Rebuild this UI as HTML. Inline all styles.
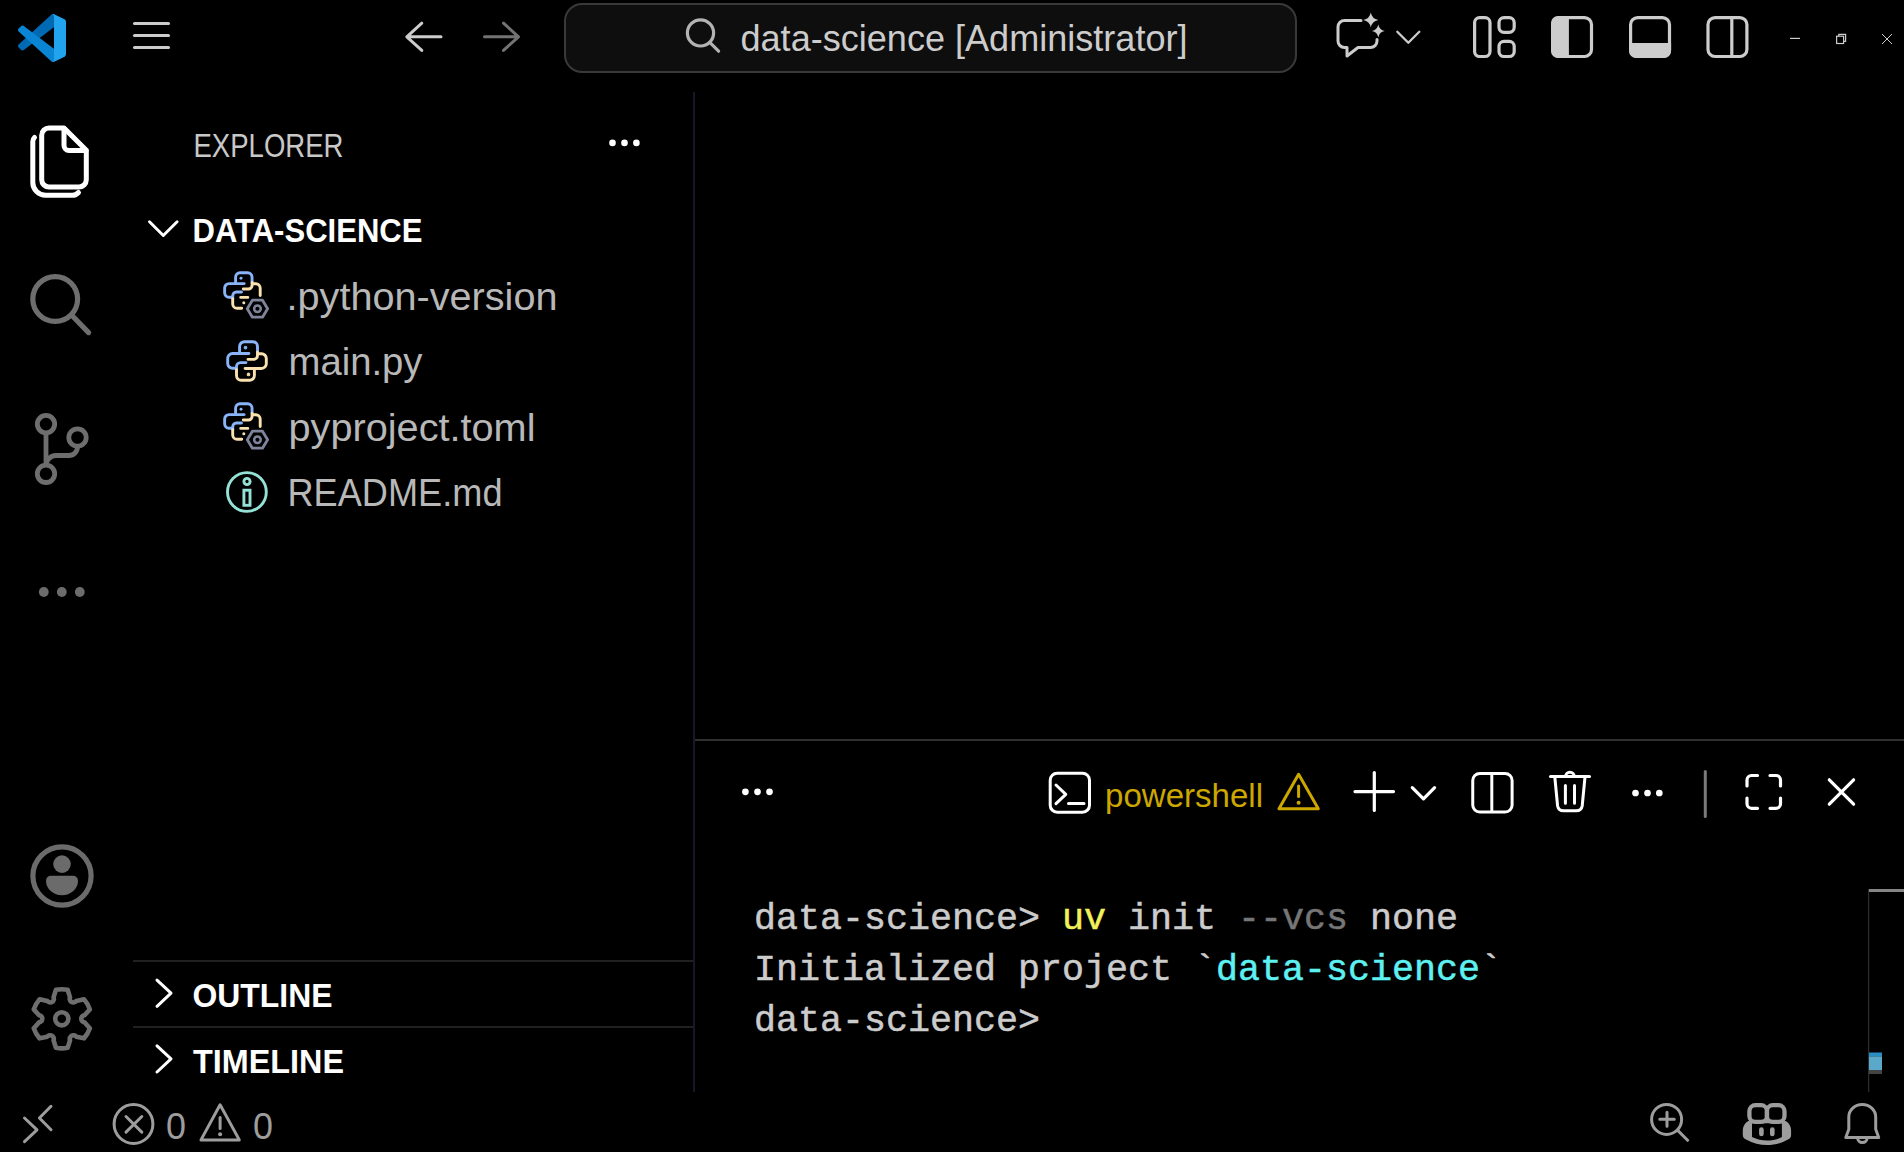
<!DOCTYPE html>
<html lang="en">
<head>
<meta charset="utf-8">
<title>data-science [Administrator] - Visual Studio Code</title>
<style>
  html, body { margin: 0; padding: 0; background: #000; width: 1904px; height: 1152px; overflow: hidden; }
  body { position: relative; font-family: "Liberation Sans", sans-serif; color: #ccc; }
  .abs { position: absolute; }
  svg { position: absolute; left: 0; top: 0; overflow: visible; }
  .titlebar { left: 0; top: 0; width: 1904px; height: 92px; background: #000; }
  .searchbox { left: 564px; top: 3px; width: 729px; height: 66px; background: #0e0e0e; border: 2px solid #393939; border-radius: 18px; }
  .activitybar { left: 0; top: 92px; width: 124px; height: 1000px; background: #000; }
  .sidebar { left: 124px; top: 92px; width: 569px; height: 1000px; background: #000; }
  .sb-border { left: 693px; top: 92px; width: 2px; height: 1000px; background: #1a1628; }
  .sep { left: 133px; width: 560px; height: 2px; background: #202020; }
  .panel-border { left: 695px; top: 739px; width: 1209px; height: 2px; background: #2f2f2f; }
  .statusbar { left: 0; top: 1092px; width: 1904px; height: 60px; background: #000; }
  text { font-family: "Liberation Sans", sans-serif; white-space: pre; }
  .mono { font-family: "Liberation Mono", monospace; stroke-width: 0.5px; }
</style>
</head>
<body>
  <div class="abs titlebar"></div>
  <div class="abs searchbox"></div>
  <div class="abs activitybar"></div>
  <div class="abs sidebar"></div>
  <div class="abs sb-border"></div>
  <div class="abs sep" style="top:960px"></div>
  <div class="abs sep" style="top:1026px"></div>
  <div class="abs panel-border"></div>
  <div class="abs statusbar"></div>

  <svg width="1904" height="1152" viewBox="0 0 1904 1152">
    
    <!-- VS Code logo -->
    <g transform="translate(18,14) scale(0.48)">
      <path fill="#0069b4" d="M96.46 10.8L75.86 .88C73.47-.27 70.62.21 68.75 2.08L1.3 63.58c-1.82 1.66-1.81 4.51 0 6.16l5.51 5.01c1.49 1.35 3.72 1.45 5.32.24L93.36 13.37C96.09 11.3 100 13.25 100 16.67v-.24c0-2.4-1.38-4.59-3.54-5.63z"/>
      <path fill="#0a85d4" d="M96.46 89.2L75.86 99.12c-2.39 1.15-5.24.67-7.11-1.2L1.3 36.42c-1.82-1.66-1.81-4.51 0-6.16l5.51-5.01c1.49-1.35 3.72-1.45 5.32-.24l81.23 61.62c2.73 2.07 6.64.12 6.64-3.3v.24c0 2.4-1.38 4.59-3.54 5.63z"/>
      <path fill="#22a3ee" d="M75.86 99.13c-2.39 1.15-5.24.66-7.11-1.21C71.06 100.22 75 98.59 75 95.33V4.67c0-3.26-3.94-4.89-6.25-2.59C70.62.21 73.47-.27 75.86.87l20.6 9.91c2.16 1.04 3.54 3.23 3.54 5.63v67.17c0 2.4-1.38 4.59-3.54 5.63l-20.6 9.91z"/>
    </g>
    <!-- hamburger -->
    <g stroke="#cccccc" stroke-width="3" stroke-linecap="round">
      <line x1="134.5" y1="23.5" x2="168.5" y2="23.5"/>
      <line x1="134.5" y1="35.5" x2="168.5" y2="35.5"/>
      <line x1="134.5" y1="47.5" x2="168.5" y2="47.5"/>
    </g>
    <!-- back / forward -->
    <g fill="none" stroke="#cccccc" stroke-width="3" stroke-linecap="round" stroke-linejoin="round">
      <path d="M441 36.8H407M421.8 23.2L406.8 36.8L421.8 50.4"/>
    </g>
    <g fill="none" stroke="#737373" stroke-width="3" stroke-linecap="round" stroke-linejoin="round">
      <path d="M484.5 36.8H518.3M503.5 23.2L518.5 36.8L503.5 50.4"/>
    </g>
    <!-- search -->
    <g fill="none" stroke="#b3b3b3" stroke-width="3.2" stroke-linecap="round">
      <circle cx="700.5" cy="32.9" r="13.1"/>
      <line x1="710.5" y1="43.2" x2="718.6" y2="51.2"/>
    </g>
    <text x="740.5" y="51.2" font-size="37" fill="#cccccc" textLength="447" lengthAdjust="spacingAndGlyphs">data-science [Administrator]</text>
    <!-- copilot chat -->
    <g fill="none" stroke="#cccccc" stroke-width="3" stroke-linejoin="round" stroke-linecap="round">
      <path d="M1361 20.5H1344.5A6.5 6.5 0 0 0 1338 27V41A6.5 6.5 0 0 0 1344.5 47.5H1347V56L1358 47.5H1370.5A6.5 6.5 0 0 0 1377 41V39.5"/>
      <path d="M1397.3 31.8L1408.3 42.8L1419.3 31.8" stroke-width="2.3"/>
    </g>
    <g fill="#cccccc">
      <path d="M1370.8 12.5Q1372 18.8 1378.3 20Q1372 21.2 1370.8 27.5Q1369.6 21.2 1363.3 20Q1369.6 18.8 1370.8 12.5Z"/>
      <path d="M1378.3 24.6Q1379.3 30 1384.7 31Q1379.3 32 1378.3 37.4Q1377.3 32 1371.9 31Q1377.3 30 1378.3 24.6Z"/>
    </g>
    <!-- layout icons -->
    <g fill="none" stroke="#cccccc" stroke-width="3.2">
      <rect x="1474.6" y="17.6" width="15.4" height="38.9" rx="5"/>
      <rect x="1499" y="17.6" width="15.2" height="14.7" rx="5"/>
      <rect x="1499" y="41.3" width="15.2" height="15.2" rx="5"/>
      <rect x="1552.6" y="17.6" width="38.9" height="38.9" rx="7"/>
      <rect x="1630.6" y="17.6" width="38.9" height="38.9" rx="7"/>
      <rect x="1708" y="17.6" width="38.9" height="38.9" rx="7"/>
      <line x1="1731.8" y1="18" x2="1731.8" y2="56"/>
    </g>
    <g fill="#cccccc">
      <path d="M1568.9 16H1558A7 7 0 0 0 1551 23V51.1A7 7 0 0 0 1558 58.1H1568.9Z"/>
      <path d="M1629 42.9V51.1A7 7 0 0 0 1636 58.1H1664.1A7 7 0 0 0 1671.1 51.1V42.9Z"/>
    </g>
    <!-- window controls -->
    <g fill="none" stroke="#cccccc" stroke-width="1.2">
      <line x1="1790" y1="38.4" x2="1800" y2="38.4"/>
      <rect x="1836.6" y="36.2" width="7" height="7.3"/>
      <path d="M1838.8 36.2V34.4H1845.6V41.4H1843.6"/>
      <path d="M1882 34L1892 44M1892 34L1882 44" stroke-width="1"/>
    </g>

    
    <!-- explorer (files) -->
    <g fill="none" stroke="#ffffff" stroke-width="5" stroke-linecap="round" stroke-linejoin="round">
      <path d="M64 128H49A7.3 7.3 0 0 0 41.7 135.3V179.7A7.3 7.3 0 0 0 49 187H79A7.3 7.3 0 0 0 86.3 179.7V150.3L64 128Z"/>
      <path d="M64 128.5V145.5A5 5 0 0 0 69 150.5H86"/>
      <path d="M34.5 137.5A5.5 5.5 0 0 0 32.8 141.5V182.5A12.8 12.8 0 0 0 45.6 195.3H71.5A8.5 8.5 0 0 0 78.5 192.5"/>
    </g>
    <!-- search -->
    <g fill="none" stroke="#6e6e6e" stroke-width="5.2" stroke-linecap="round">
      <circle cx="55.2" cy="299" r="22.4"/>
      <line x1="72" y1="315.5" x2="88.6" y2="332.6"/>
    </g>
    <!-- source control -->
    <g fill="none" stroke="#6e6e6e" stroke-width="4.8">
      <circle cx="46" cy="424.1" r="8.7"/>
      <circle cx="46" cy="473.8" r="8.7"/>
      <circle cx="77.5" cy="437.5" r="8.7"/>
      <line x1="46" y1="432.5" x2="46" y2="465.5"/>
      <path d="M77.5 446V447A8.5 8.5 0 0 1 69 455.5H56A10 10 0 0 0 46 465.5"/>
    </g>
    <!-- more -->
    <g fill="#6c6c6c">
      <circle cx="43.8" cy="592" r="4.9"/>
      <circle cx="61.8" cy="592" r="4.9"/>
      <circle cx="79.8" cy="592" r="4.9"/>
    </g>
    <!-- account -->
    <g fill="#6e6e6e">
      <circle cx="62" cy="876" r="29.1" fill="none" stroke="#6b6b6b" stroke-width="5.2"/>
      <circle cx="62" cy="864.1" r="8.8" fill="#6b6b6b"/>
      <path fill="#6b6b6b" d="M51 875.8H73A5 5 0 0 1 78 880.8A16 14.5 0 0 1 46 880.8A5 5 0 0 1 51 875.8Z"/>
    </g>
    <!-- gear -->
    <g fill="none" stroke="#6e6e6e" stroke-width="4.6" stroke-linejoin="round">
      <path d="M53.56 997.33L55.95 989.78A29.60 29.60 0 0 1 67.65 989.78L70.04 997.33A3.62 3.62 0 0 0 76.27 1000.93L84.00 999.23A29.60 29.60 0 0 1 89.85 1009.36L84.52 1015.20A3.62 3.62 0 0 0 84.52 1022.40L89.85 1028.24A29.60 29.60 0 0 1 84.00 1038.37L76.27 1036.67A3.62 3.62 0 0 0 70.04 1040.27L67.65 1047.82A29.60 29.60 0 0 1 55.95 1047.82L53.56 1040.27A3.62 3.62 0 0 0 47.33 1036.67L39.60 1038.37A29.60 29.60 0 0 1 33.75 1028.24L39.08 1022.40A3.62 3.62 0 0 0 39.08 1015.20L33.75 1009.36A29.60 29.60 0 0 1 39.60 999.23L47.33 1000.93A3.62 3.62 0 0 0 53.56 997.33Z"/>
      <circle cx="61.8" cy="1018.8" r="6.6"/>
    </g>

    
    
    <text x="193.5" y="156.7" font-size="34" fill="#c8c8c8" textLength="150" lengthAdjust="spacingAndGlyphs">EXPLORER</text>
    <g fill="#ffffff"><circle cx="612.5" cy="142.9" r="3.3"/><circle cx="624.5" cy="142.9" r="3.3"/><circle cx="636.4" cy="142.9" r="3.3"/></g>
    <path d="M149.5 221.8L163.3 235.5L177.1 221.8" fill="none" stroke="#ffffff" stroke-width="3" stroke-linecap="round" stroke-linejoin="round"/>
    <text x="192.5" y="241.6" font-size="33" font-weight="700" fill="#ffffff" textLength="230" lengthAdjust="spacingAndGlyphs">DATA-SCIENCE</text>
    <g transform="translate(218,268)">
        <g transform="translate(24.4 22.5) scale(0.92) translate(-27 -26)" fill="none" stroke-width="3.15" stroke-linecap="round" stroke="#89b4fa"><path d="M26 27.6H20.5A4 4 0 0 0 16.5 31.6V34.8M16.5 33.3H12.5A4.8 4.8 0 0 1 7.7 28.5V23.3A4.8 4.8 0 0 1 12.5 18.5H28.9M19.6 18.5V11.5A4.8 4.8 0 0 1 24.4 6.7H32.7A4.8 4.8 0 0 1 37.5 11.5V17.2"/><circle cx="25.5" cy="12.6" r="1.6" fill="#89b4fa" stroke="none"/></g>
        <g fill="none" stroke="#f9e2af" stroke-width="2.9" stroke-linecap="round">
          <path d="M25.3 21H30.4A3.7 3.7 0 0 0 34.1 17.3V14.4M34.1 15.8H37.8A4.4 4.4 0 0 1 42.2 20.2V27.5M29.8 29.4H22.7M23.7 40.3H19.1A4.4 4.4 0 0 1 14.7 35.9V30.6"/>
          <circle cx="25.8" cy="34.8" r="1.5" fill="#f9e2af" stroke="none"/>
        </g>
        <g fill="none" stroke="#7f849c" stroke-width="2.8" stroke-linejoin="round">
          <path d="M29.3 40.7L34.4 32.2H44.5L49.6 40.7L44.5 49.2H34.4Z"/>
          <circle cx="39.45" cy="40.7" r="3.3" stroke-width="2.5"/>
        </g>
      </g>
    <text x="286.5" y="310.1" font-size="39" fill="#b8b8b8" textLength="271" lengthAdjust="spacingAndGlyphs">.python-version</text>
    <g transform="translate(220,335)" fill="none" stroke-width="2.9" stroke-linecap="round">
        <g stroke="#89b4fa"><path d="M26 27.6H20.5A4 4 0 0 0 16.5 31.6V34.8M16.5 33.3H12.5A4.8 4.8 0 0 1 7.7 28.5V23.3A4.8 4.8 0 0 1 12.5 18.5H28.9M19.6 18.5V11.5A4.8 4.8 0 0 1 24.4 6.7H32.7A4.8 4.8 0 0 1 37.5 11.5V17.2"/><circle cx="25.5" cy="12.6" r="1.3" fill="#89b4fa" stroke="none"/><circle cx="25.5" cy="12.6" r="0.4"/></g>
        <g stroke="#f9e2af" transform="rotate(180 27 26)"><path d="M26 27.6H20.5A4 4 0 0 0 16.5 31.6V34.8M16.5 33.3H12.5A4.8 4.8 0 0 1 7.7 28.5V23.3A4.8 4.8 0 0 1 12.5 18.5H28.9M19.6 18.5V11.5A4.8 4.8 0 0 1 24.4 6.7H32.7A4.8 4.8 0 0 1 37.5 11.5V17.2"/><circle cx="25.5" cy="12.6" r="1.3" fill="#f9e2af" stroke="none"/><circle cx="25.5" cy="12.6" r="0.4"/></g>
      </g>
    <text x="288.5" y="375.3" font-size="39" fill="#b8b8b8" textLength="134" lengthAdjust="spacingAndGlyphs">main.py</text>
    <g transform="translate(218,399)">
        <g transform="translate(24.4 22.5) scale(0.92) translate(-27 -26)" fill="none" stroke-width="3.15" stroke-linecap="round" stroke="#89b4fa"><path d="M26 27.6H20.5A4 4 0 0 0 16.5 31.6V34.8M16.5 33.3H12.5A4.8 4.8 0 0 1 7.7 28.5V23.3A4.8 4.8 0 0 1 12.5 18.5H28.9M19.6 18.5V11.5A4.8 4.8 0 0 1 24.4 6.7H32.7A4.8 4.8 0 0 1 37.5 11.5V17.2"/><circle cx="25.5" cy="12.6" r="1.6" fill="#89b4fa" stroke="none"/></g>
        <g fill="none" stroke="#f9e2af" stroke-width="2.9" stroke-linecap="round">
          <path d="M25.3 21H30.4A3.7 3.7 0 0 0 34.1 17.3V14.4M34.1 15.8H37.8A4.4 4.4 0 0 1 42.2 20.2V27.5M29.8 29.4H22.7M23.7 40.3H19.1A4.4 4.4 0 0 1 14.7 35.9V30.6"/>
          <circle cx="25.8" cy="34.8" r="1.5" fill="#f9e2af" stroke="none"/>
        </g>
        <g fill="none" stroke="#7f849c" stroke-width="2.8" stroke-linejoin="round">
          <path d="M29.3 40.7L34.4 32.2H44.5L49.6 40.7L44.5 49.2H34.4Z"/>
          <circle cx="39.45" cy="40.7" r="3.3" stroke-width="2.5"/>
        </g>
      </g>
    <text x="288.5" y="440.7" font-size="39" fill="#b8b8b8" textLength="247" lengthAdjust="spacingAndGlyphs">pyproject.toml</text>
    <g fill="none" stroke="#94e2d5" stroke-width="2.9">
      <circle cx="246.9" cy="492" r="19.4"/>
      <circle cx="247" cy="481.5" r="3.1"/>
      <rect x="243.9" y="490.2" width="6.1" height="15.1"/>
    </g>
    <text x="287.5" y="506.3" font-size="39" fill="#b8b8b8" textLength="215" lengthAdjust="spacingAndGlyphs">README.md</text>
    <path d="M157 980.1L171 993.2L157 1006.3" fill="none" stroke="#ffffff" stroke-width="3" stroke-linecap="round" stroke-linejoin="round"/>
    <text x="192.5" y="1006.9" font-size="33" font-weight="700" fill="#ffffff" textLength="140" lengthAdjust="spacingAndGlyphs">OUTLINE</text>
    <path d="M157 1045.8L171 1058.9L157 1072" fill="none" stroke="#ffffff" stroke-width="3" stroke-linecap="round" stroke-linejoin="round"/>
    <text x="193" y="1072.7" font-size="33" font-weight="700" fill="#ffffff" textLength="151" lengthAdjust="spacingAndGlyphs">TIMELINE</text>

    
    <!-- terminal toolbar -->
    <g fill="#ffffff"><circle cx="745.4" cy="791.8" r="3.35"/><circle cx="757.5" cy="791.8" r="3.35"/><circle cx="769.5" cy="791.8" r="3.35"/></g>
    <g fill="none" stroke="#ffffff" stroke-width="3" stroke-linecap="round" stroke-linejoin="round">
      <rect x="1050.2" y="773.2" width="39.3" height="39" rx="7"/>
      <path d="M1056 785L1065.8 794.3L1056 803.6M1068.5 803.6H1084"/>
    </g>
    <text x="1105" y="807.2" font-size="34" fill="#cca700" textLength="158" lengthAdjust="spacingAndGlyphs">powershell</text>
    <g fill="none" stroke="#cca700" stroke-width="3" stroke-linejoin="round" stroke-linecap="round">
      <path d="M1298.6 774.2L1318.3 808.8H1279Z"/>
      <line x1="1298.6" y1="786" x2="1298.6" y2="796.5"/>
    </g>
    <circle cx="1298.6" cy="802.8" r="2" fill="#cca700"/>
    <g fill="none" stroke="#ffffff" stroke-width="3.2" stroke-linecap="round" stroke-linejoin="round">
      <path d="M1355 791.6H1393.5M1374.3 772.5V810.5"/>
      <path d="M1412.3 787.7L1423.5 798.9L1434.6 787.7"/>
    </g>
    <g fill="none" stroke="#ffffff" stroke-width="3">
      <rect x="1472.75" y="773.5" width="39.35" height="38.6" rx="7"/>
      <line x1="1491.8" y1="774" x2="1491.8" y2="812"/>
    </g>
    <g fill="none" stroke="#ffffff" stroke-width="3" stroke-linecap="round" stroke-linejoin="round">
      <path d="M1550.5 776.6H1589.5"/>
      <path d="M1565.5 776.6A4.4 4.4 0 0 1 1574.3 776.6"/>
      <path d="M1554.8 777L1557.6 806A6 6 0 0 0 1563.5 810.8H1576.3A6 6 0 0 0 1582.2 806L1585 777"/>
      <path d="M1565.4 785.5V803.2M1574.5 785.5V803.2"/>
    </g>
    <g fill="#ffffff"><circle cx="1635.5" cy="793" r="3.35"/><circle cx="1647.5" cy="793" r="3.35"/><circle cx="1659.3" cy="793" r="3.35"/></g>
    <line x1="1705.3" y1="771.5" x2="1705.3" y2="816.5" stroke="#7a7a7a" stroke-width="3" stroke-linecap="round"/>
    <g fill="none" stroke="#ffffff" stroke-width="3.2" stroke-linecap="round" stroke-linejoin="round">
      <path d="M1747 786V780A4.5 4.5 0 0 1 1751.5 775.5H1757.5"/>
      <path d="M1770 775.5H1776A4.5 4.5 0 0 1 1780.5 780V786"/>
      <path d="M1780.5 798V803.8A4.5 4.5 0 0 1 1776 808.3H1770"/>
      <path d="M1757.5 808.3H1751.5A4.5 4.5 0 0 1 1747 803.8V798"/>
      <path d="M1829.3 779.8L1853.6 804.2M1853.6 779.8L1829.3 804.2"/>
    </g>
    <!-- terminal text -->
    <text class="mono" x="754" y="928.5" font-size="36.67" fill="#cccccc" stroke="#cccccc">data-science&gt; <tspan fill="#f1f15a" stroke="#f1f15a">uv</tspan> init <tspan fill="#767676" stroke="#767676">--vcs</tspan> none</text>
    <text class="mono" x="754" y="979.5" font-size="36.67" fill="#cccccc" stroke="#cccccc">Initialized project `<tspan fill="#5ef1f1" stroke="#5ef1f1">data-science</tspan>`</text>
    <text class="mono" x="754" y="1030.6" font-size="36.67" fill="#cccccc" stroke="#cccccc">data-science&gt;</text>
    <!-- scrollbar -->
    <rect x="1868" y="889" width="1.2" height="203" fill="#2d2d2d"/>
    <rect x="1869" y="889" width="35" height="3" fill="#858585"/>
    <rect x="1869" y="1052.5" width="13" height="3.8" fill="#2a8ec4"/>
    <rect x="1869" y="1056.3" width="13" height="13.7" fill="#5aa9ca"/>
    <rect x="1869" y="1070" width="13" height="4" fill="#444444"/>

    
    <g fill="none" stroke="#9d9d9d" stroke-width="3" stroke-linecap="round" stroke-linejoin="round">
      <path d="M24.5 1118L37 1129.8L24.5 1141.6"/>
      <path d="M51 1106.3L39.4 1118L51 1129.7"/>
      <circle cx="133.5" cy="1124" r="19.4"/>
      <path d="M126 1116.5L141.8 1132.1M141.8 1116.5L126 1132.1"/>
      <path d="M220.1 1104.8L239.3 1139.9H201Z"/>
      <line x1="220.1" y1="1117.5" x2="220.1" y2="1128.5"/>
    </g>
    <circle cx="220.1" cy="1134.3" r="2" fill="#9d9d9d"/>
    <text x="166" y="1138.8" font-size="36" fill="#9d9d9d" textLength="20" lengthAdjust="spacingAndGlyphs">0</text>
    <text x="253" y="1138.8" font-size="36" fill="#9d9d9d" textLength="20" lengthAdjust="spacingAndGlyphs">0</text>
    <g fill="none" stroke="#9d9d9d" stroke-width="3" stroke-linecap="round" stroke-linejoin="round">
      <circle cx="1666.6" cy="1119.4" r="15"/>
      <path d="M1659.8 1119.3H1674.3M1667 1112.3V1126.3"/>
      <path d="M1677.7 1130.4L1687.6 1140.3"/>
    </g>
    <g transform="translate(1735,1097)">
      <g fill="none" stroke="#9d9d9d" stroke-width="4.3">
        <rect x="14.4" y="8.2" width="17.6" height="16.7" rx="6"/>
        <rect x="31.9" y="8.2" width="17.6" height="16.7" rx="6"/>
      </g>
      <path fill="#9d9d9d" fill-rule="evenodd" d="M13.5 24C9.5 26 7.8 30 7.8 34V38C7.8 40 9 41.5 11 42.5C18 46.5 25 48.1 32 48.1C39 48.1 46 46.5 53 42.5C55 41.5 56.1 40 56.1 38V34C56.1 30 54.5 26 50.5 24ZM17 26.2H46.9V40C42 42.5 37 43.5 32 43.5C27 43.5 22 42.5 17 40Z"/>
      <g stroke="#9d9d9d" stroke-width="4.6" stroke-linecap="round">
        <line x1="26.4" y1="32.6" x2="26.4" y2="36.9"/>
        <line x1="37.3" y1="32.6" x2="37.3" y2="36.9"/>
      </g>
    </g>
    <g transform="translate(1835,1097)" fill="none" stroke="#9d9d9d" stroke-width="3" stroke-linejoin="round">
      <path d="M13.8 32.2V20A13.45 12.6 0 0 1 40.7 20V32.2L43.7 40.5H10.8L13.8 32.2Z"/>
      <path d="M22.6 40.8A4.8 4.8 0 0 0 32.2 40.8"/>
    </g>

  </svg>
</body>
</html>
